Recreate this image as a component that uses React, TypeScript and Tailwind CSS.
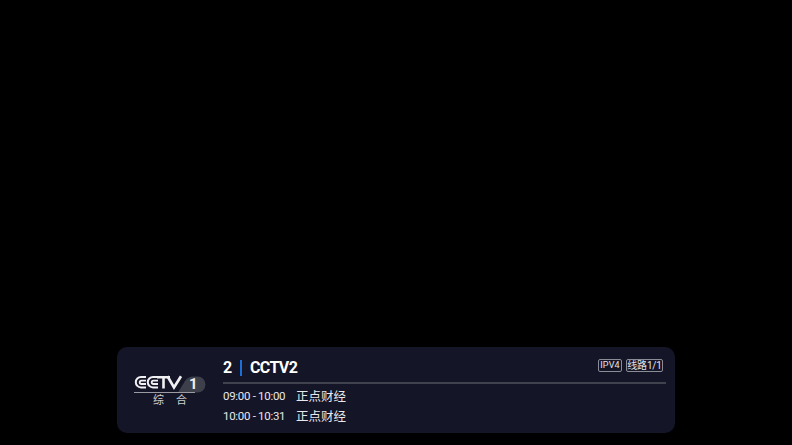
const cjk = { fontFamily: 'Roboto, "Noto Sans CJK SC", sans-serif' };

function CctvLogo() {
  return (
    <svg width="75" height="21" viewBox="0 0 75 21" fill="none" className="block">
      {/* grey pill with the channel number sits behind the wordmark */}
      <path d="M45 18.5 L52 7 Q55 2.5 60 2.5 H64.5 A8 8 0 0 1 64.5 18.5 Z" fill="#3d3f4b" />
      <path d="M1 18.5 H62" stroke="#9a9ba3" strokeWidth="1" />
      <g stroke="#f0f0f2" fill="none" strokeLinecap="butt">
        <path d="M13 3 H8 A5 5 0 0 0 8 13.4 H13" strokeWidth="2" />
        <path d="M13 6.6 H8.4 A1.7 1.7 0 0 0 8.4 10 H13" strokeWidth="1.8" />
        <path d="M25 3 H20 A5 5 0 0 0 20 13.4 H25" strokeWidth="2" />
        <path d="M25 6.6 H20.4 A1.7 1.7 0 0 0 20.4 10 H25" strokeWidth="1.8" />
        <path d="M24 3.2 H37 M30.5 3.2 V14.4" strokeWidth="2.6" />
        <path d="M34.5 2.2 L41 13.4 L48 2.2" strokeWidth="2.7" />
      </g>
    </svg>
  );
}

export default function App() {
  return (
    <div className="flex h-screen w-full flex-col items-center justify-end bg-black pb-[12px]" style={cjk}>
      <div className="flex h-[86px] w-[558px] rounded-[10px] bg-[#141527]">
        <div className="flex w-[106px] shrink-0 flex-col pl-[16px] pt-[27px]">
          <div className="relative h-[21px] w-[75px]">
            <CctvLogo />
            <span className="absolute left-[56px] top-[1px] text-[15px] leading-[18px] font-bold text-[#f0f0f2]">1</span>
          </div>
          <div className="-mt-[1px] flex w-[74px] justify-center gap-[12px] text-[11px] leading-[13px] text-[#cfcfd3]">
            <span>综</span>
            <span>合</span>
          </div>
        </div>
        <div className="flex min-w-0 flex-1 flex-col pr-[9px]">
          <div className="flex h-[35px] items-center pt-[7px]">
            <span className="text-[16px] font-bold tracking-[-0.3px] text-white">2</span>
            <span className="ml-[8px] -mt-[1px] h-[16px] w-[2px] bg-[#1c6fd8]" />
            <span className="ml-[8px] text-[16px] font-bold tracking-[-0.6px] text-white">CCTV2</span>
            <div className="ml-auto -mt-[5px] flex items-center gap-[4px] pr-[3px]">
              <span className="flex h-[13px] w-[24px] items-center justify-center rounded-[2px] border border-[#8a8c96] text-[9px] tracking-[0.2px] text-[#e4e4e8]">IPV4</span>
              <span className="flex h-[13px] w-[37px] items-center justify-center rounded-[2px] border border-[#8a8c96] text-[10px] tracking-[-0.2px] text-[#e4e4e8]">线路1/1</span>
            </div>
          </div>
          <div className="h-[2px] bg-[#40424e]" />
          <div className="mt-[3px] flex h-[20px] items-center text-[#e8e8ec]">
            <span className="w-[73px] text-[11.5px] tracking-[-0.3px]">09:00 - 10:00</span>
            <span className="text-[12.5px]">正点财经</span>
          </div>
          <div className="flex h-[20px] items-center text-[#e8e8ec]">
            <span className="w-[73px] text-[11.5px] tracking-[-0.3px]">10:00 - 10:31</span>
            <span className="text-[12.5px]">正点财经</span>
          </div>
        </div>
      </div>
    </div>
  );
}
